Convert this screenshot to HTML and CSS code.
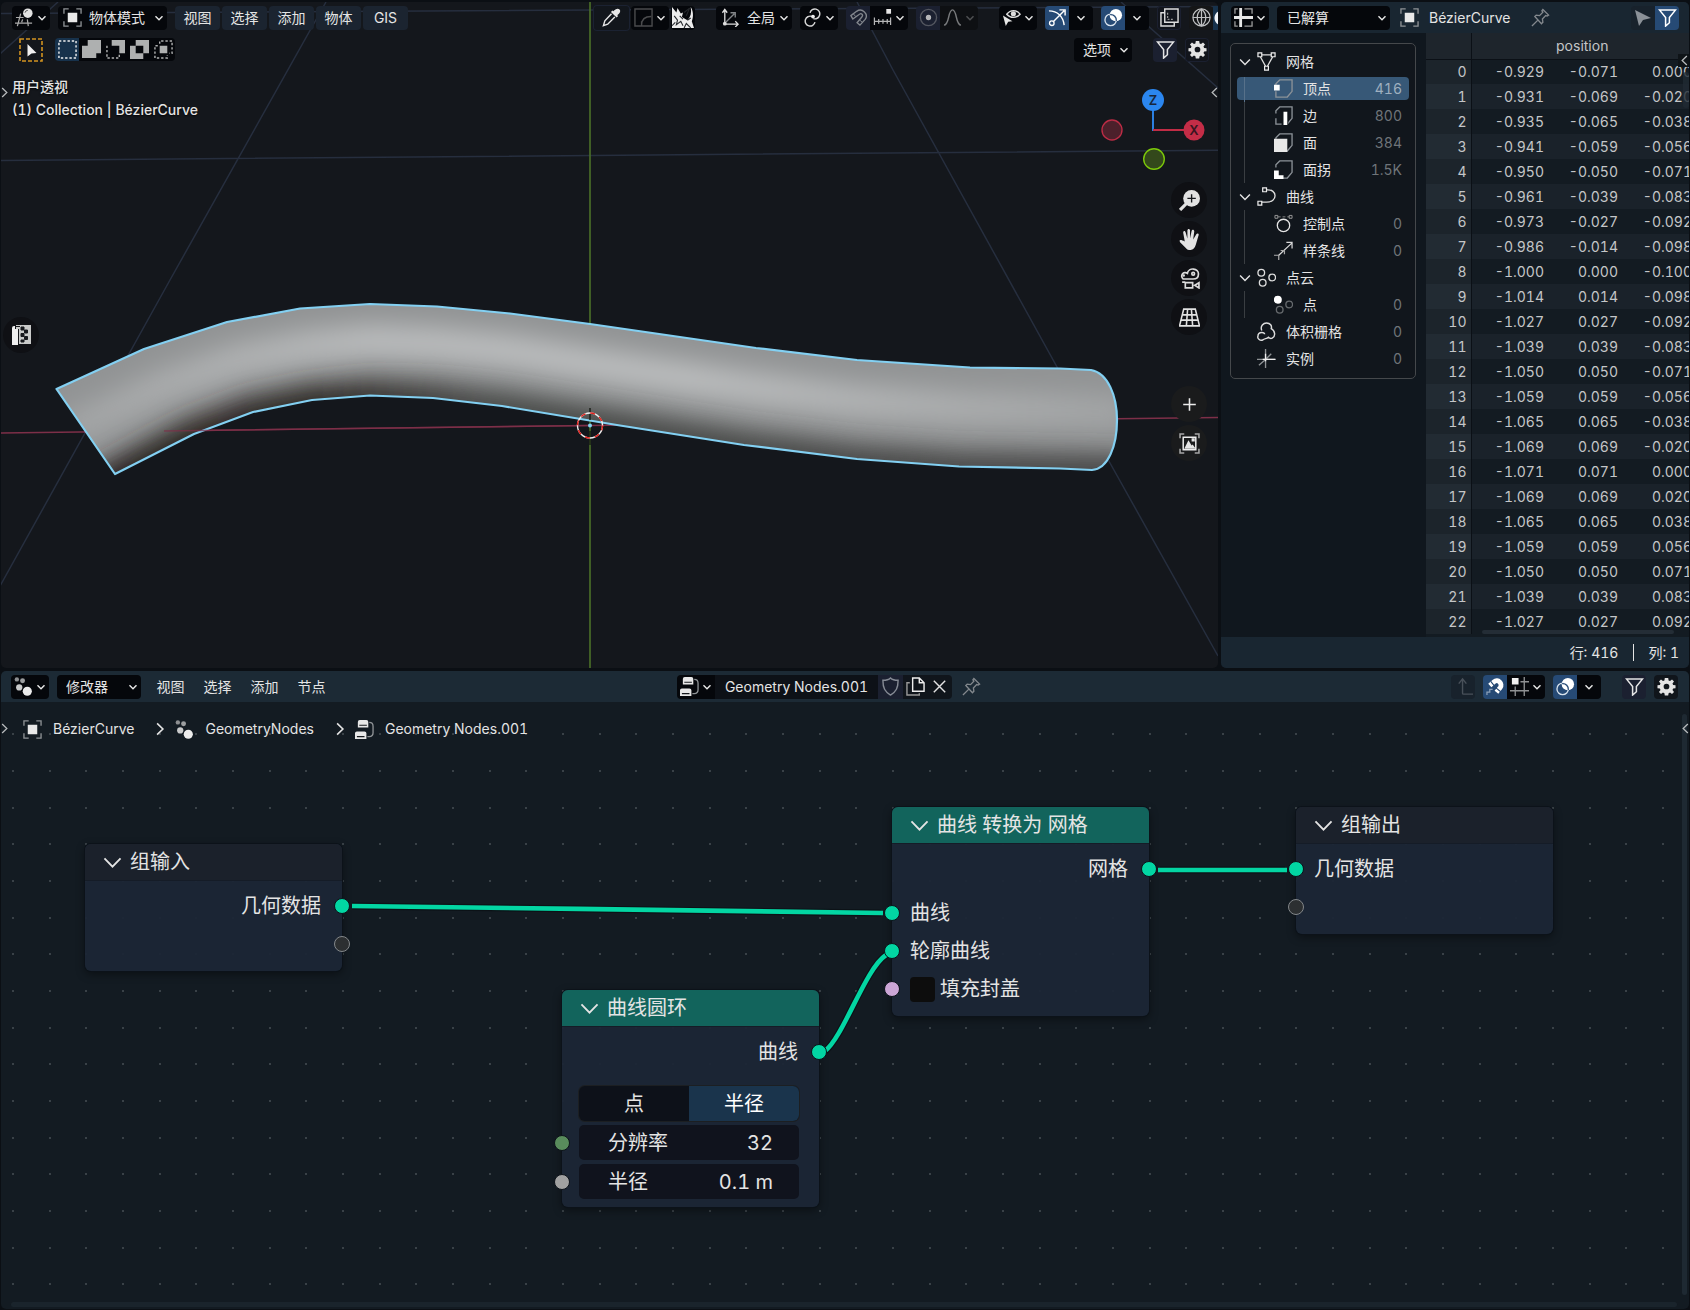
FILE: index.html
```html
<!DOCTYPE html>
<html lang="zh-CN">
<head>
<meta charset="utf-8">
<title>Geometry Nodes.001</title>
<link rel="stylesheet" href="styles.css">
</head>
<body>
<svg class="defs" aria-hidden="true">
  <symbol id="chev" viewBox="0 0 10 10"><path d="M1.500 3.200 5 6.800 8.500 3.200" fill="none" stroke="currentColor"/></symbol>
  <symbol id="obj" viewBox="0 0 20 20"><path d="M5 5h10v10H5z" fill="#e8e8e8"/><path d="M1 6V1h5M14 1h5v5M19 14v5h-5M6 19H1v-5" fill="none" stroke="#8f9396" stroke-width="1.400"/></symbol>
  <symbol id="view3d" viewBox="0 0 20 20"><path d="M1 10h8M0 16h18M6 6 2.500 19M13 12l1 7M8 12l-1 3" stroke="#aaa" stroke-width="1.300" fill="none"/><circle cx="13.500" cy="5.500" r="5" fill="#e2e2e2"/><path d="M10.500 5a3 3 0 0 1 3-2.500" stroke="#555" fill="none"/></symbol>
  <symbol id="cursor" viewBox="0 0 12 12"><path d="M0 0 12 6 6 7.500 3 12z" fill="currentColor"/></symbol>
  <symbol id="dropper" viewBox="0 0 20 20"><path d="M12 3.500c2-3 5-3.500 6.500-2s.5 4-2.500 6l1 1-1.600 1.600-6-6L11 2.500z" fill="#e6e6e6"/><path d="M10 6 3 13.500 1.500 18.500 6 17l7.500-7.500" fill="none" stroke="#e6e6e6" stroke-width="1.500"/></symbol>
  <symbol id="falloff" viewBox="0 0 20 20"><path d="M1 1h18v18H1zM8 18c0-6 3-9 10-9M8 14v5" fill="none" stroke="#4a4b4d" stroke-width="1.500"/></symbol>
  <symbol id="beast" viewBox="0 0 20 20"><path d="M0 0 4 5 5 1l3 5 2-1-1 4 5 3C17 9 18 5 17 0c2 3 3 8 1 13l2 6H0z" fill="#ececec"/><path d="m2 8 3 4-1 4 4-3 2 4M7 8l3 3M11 5l5-4-3 7M0 17l3-3M11 19l2-4 4 4M14 12l3-2" stroke="#24272b" fill="none" stroke-width="1"/></symbol>
  <symbol id="axes" viewBox="0 0 20 20"><path d="M4 18V2M1.500 5 4 1.500 6.500 5M4 17h14M15 14l3 3-3 3" fill="none" stroke="#ddd" stroke-width="1.400"/><path d="m5 15 9-9M10 5h5v5" fill="none" stroke="#84878a" stroke-width="1.400"/><circle cx="4" cy="16.500" r="2" fill="#ddd"/></symbol>
  <symbol id="pivot" viewBox="0 0 20 20"><path d="M10 8.500a5.200 5.200 0 1 0-1 7M10 11.500a5.200 5.200 0 1 0 1-7" fill="none" stroke="#d6d6d6" stroke-width="1.500" transform="rotate(-38 10 10)"/><circle cx="10.500" cy="9" r="2" fill="#eee"/></symbol>
  <symbol id="magnet" viewBox="0 0 20 20"><path d="m2 8 6-4.500c6-4 13 3 9 8.500L11.500 18 8.500 15.500l5-6C15.500 7 13 5 11 6.500L4 11.500z" fill="none" stroke="#82868d" stroke-width="1.400"/><path d="m4.500 6 2.500 3M14 15l-3-2.500" stroke="#82868d" fill="none"/></symbol>
  <symbol id="ruler" viewBox="0 0 20 20"><path d="M1 14h18M1.500 10v8M6 11.500v5M10.500 11.500v5M15 11.500v5M18.500 10v8" fill="none" stroke="#b5b6b7" stroke-width="1.300"/><path d="M14 1h5v5h-5z" fill="#e6e6e6"/></symbol>
  <symbol id="prop" viewBox="0 0 20 20"><circle cx="10" cy="10" r="8.500" fill="none" stroke="#53565f" stroke-width="1.400"/><circle cx="10" cy="10" r="2.800" fill="#b4b5b8"/></symbol>
  <symbol id="bell" viewBox="0 0 20 20"><path d="M1 18C7 18 5 2 10 2s3 16 9 16" fill="none" stroke="#77797b" stroke-width="1.500"/></symbol>
  <symbol id="eye" viewBox="0 0 20 20"><path d="M5 6.500C9 1.500 15 1.500 19 6.500c-4 4.500-10 4.500-14 0z" fill="none" stroke="#ddd" stroke-width="1.500"/><circle cx="12" cy="6" r="2.700" fill="#ddd"/><path d="m1 8 10 6-4.500.5L4 19z" fill="#e6e6e6"/></symbol>
  <symbol id="gizmo" viewBox="0 0 20 20"><path d="M1 3c9 0 15 6 16 15M5 15 17 3M12 2h6v6" fill="none" stroke="#fff" stroke-width="1.500"/><circle cx="4" cy="16" r="2.400" fill="#264a75" stroke="#fff" stroke-width="1.400"/></symbol>
  <symbol id="overlay" viewBox="0 0 20 20"><circle cx="12.500" cy="7.500" r="6.500" fill="#fff"/><circle cx="7" cy="12.500" r="6" fill="none" stroke="#d8e2ec" stroke-width="1.400"/><path d="M6.500 7a6 6 0 0 1 6.500 6.500" fill="none" stroke="#264a75" stroke-width="1.400"/></symbol>
  <symbol id="xray" viewBox="0 0 20 20"><path d="M5 1h14v14H5z" fill="none" stroke="#ddd" stroke-width="1.500"/><path d="M5 5H1v14h14v-4" fill="none" stroke="#ddd" stroke-width="1.500"/><path d="M8 5v7h7" fill="none" stroke="#999" stroke-width="1.300" stroke-dasharray="2 1.500"/></symbol>
  <symbol id="globe" viewBox="0 0 20 20"><g fill="none" stroke="#bfc0c1" stroke-width="1.300"><circle cx="10" cy="10" r="9"/><path d="M10 1v18M1 10h18M10 1c-6 5-6 13 0 18M10 1c6 5 6 13 0 18"/></g></symbol>
  <symbol id="funnel" viewBox="0 0 20 20"><path d="M1.500 2h17L12 10v5.500L8 19v-9z" fill="none" stroke="currentColor" stroke-width="1.600"/></symbol>
  <symbol id="gear" viewBox="0 0 20 20"><path d="M8.200 1h3.600l.4 2.600 1.500.6L15.800 2.600l2.100 2.100-1.600 2.200.7 1.500 2.500.3v3.100l-2.500.4-.7 1.500 1.600 2.200-2.100 2-2.100-1.500-1.500.6-.4 2.500H8.200l-.4-2.500-1.500-.6-2.100 1.500-2.100-2 1.600-2.200-.7-1.500L.5 11.800V8.700L3 8.400l.7-1.500-1.600-2.200 2.100-2.100 2.100 1.600 1.500-.6zM10 7a3 3 0 1 0 0 6 3 3 0 0 0 0-6z" fill="#e4e4e4" fill-rule="evenodd"/></symbol>
  <symbol id="pin" viewBox="0 0 20 20"><path d="m12.500 1.500 6 6-1.500 1-1.500-.5-3.500 3.500.5 3.500-1.500 1.500L4 9l1.500-1.500 3.500.5L12.500 4.500 11.500 3zM7.500 12.500 1 19" fill="none" stroke="#83888d" stroke-width="1.400"/></symbol>
  <symbol id="sheet" viewBox="0 0 20 20"><path d="M0 8.500h20v3H0zM5.500 0h3v20h-3z" fill="#e6e6e6"/><path d="M1 6V1h3M11 1h8v5M19 14v5h-8M1 14v5h3" fill="none" stroke="#999" stroke-width="1.400"/></symbol>
  <symbol id="mesh" viewBox="0 0 20 20"><path d="M5 3h10M3.500 5 9 15M16.500 5 11 15" fill="none" stroke="#ddd" stroke-width="1.400"/><path d="M1 1h4v4H1zM15 1h4v4h-4zM8 15h4v4H8z" fill="#14181d" stroke="#eee" stroke-width="1.300"/></symbol>
  <symbol id="cube" viewBox="0 0 20 20"><path d="M2 8V5l4-4h13v12l-5 6H2v-6" fill="none" stroke="#8c9298" stroke-width="1.400"/></symbol>
  <symbol id="vert" viewBox="0 0 20 20"><use href="#cube"/><path d="M0 6h6v6H0z" fill="#fff"/></symbol>
  <symbol id="edge" viewBox="0 0 20 20"><use href="#cube"/><path d="M8 5h7v15H8z" fill="#11161b"/><path d="M10 6h4v14h-4z" fill="#fff"/></symbol>
  <symbol id="face" viewBox="0 0 20 20"><use href="#cube"/><path d="M0 6h14v14H0z" fill="#e8e8e8"/></symbol>
  <symbol id="corner" viewBox="0 0 20 20"><use href="#cube"/><path d="M0 11h5v5h5v4H0z" fill="#fff"/></symbol>
  <symbol id="curve" viewBox="0 0 20 20"><path d="M10 3c12-1 12 13 0 13H5" fill="none" stroke="#ddd" stroke-width="1.400"/><path d="M6 1h4v4H6zM1 15h4v4H1z" fill="#14181d" stroke="#eee" stroke-width="1.300"/></symbol>
  <symbol id="cpoint" viewBox="0 0 20 20"><circle cx="10" cy="12" r="6.500" fill="none" stroke="#e4e4e4" stroke-width="1.400"/><path d="M4 3h12" stroke="#888" stroke-dasharray="3 2"/><path d="M1 1.500h3v3H1zM16 1.500h3v3h-3z" fill="none" stroke="#999"/></symbol>
  <symbol id="spline" viewBox="0 0 20 20"><path d="m5 15 14-13M13 1.500h6V8" fill="none" stroke="#d9d9d9" stroke-width="1.300"/><path d="M0 15h5v5M7 10h4v4" fill="none" stroke="#a9a9a9" stroke-width="1.300"/></symbol>
  <symbol id="cloud" viewBox="0 0 20 20"><g fill="none" stroke="#ddd" stroke-width="1.400"><circle cx="4.500" cy="5" r="3.500"/><circle cx="16" cy="10" r="3.500"/><circle cx="6" cy="15.500" r="3.500"/></g></symbol>
  <symbol id="point" viewBox="0 0 20 20"><circle cx="4" cy="5" r="4.200" fill="#fff"/><g fill="none" stroke="#666a6d" stroke-width="1.400"><circle cx="16" cy="10" r="3.500"/><circle cx="6" cy="15.500" r="3.500"/></g></symbol>
  <symbol id="volume" viewBox="0 0 20 20"><path d="M5 9C3 4 7 1 10 1c4 0 6 3 5 6 4 2 5 8 1 10-2 1-3 0-4-1-2 2-4 1-6 3-3 1-6-2-5-4 0-2 1-4 4-4 2 0 3 1 3 2" fill="none" stroke="#ddd" stroke-width="1.500"/></symbol>
  <symbol id="inst" viewBox="0 0 20 20"><path d="M9 0v20M0 11h20M9 11 2 17M9 11l6-6" stroke="#8e9295" stroke-width="1.400" fill="none"/><path d="M9 5v8M6 11h13" stroke="#eee" stroke-width="1.400"/></symbol>
  <symbol id="gnmod" viewBox="0 0 20 20"><circle cx="3" cy="2.500" r="2.300" fill="#8d8f91"/><circle cx="9" cy="4" r="2.600" fill="#9c9ea0"/><circle cx="5.500" cy="11" r="3.300" fill="#c9cacb"/><circle cx="14" cy="15" r="4.800" fill="#ececec"/></symbol>
  <symbol id="tree" viewBox="0 0 20 20"><path d="M5 0h7q2 0 2 2v6H3V2q0-2 2-2zM2 12h8q2 0 2 2v6H0v-6q0-2 2-2z" fill="#e8e8e8"/><path d="M4.500 5.500h8M2 17.500h8" stroke="#16191d" stroke-width="1.200"/><path d="M15 2.500q4 0 4 4v7q0 4-4 4h-2" fill="none" stroke="#8f9396" stroke-width="1.400"/></symbol>
  <symbol id="shield" viewBox="0 0 20 20"><path d="M10 1c2 2 5 2.500 8 2.500 0 8-2 12-8 15.500C4 15.500 2 11.500 2 3.500 5 3.500 8 3 10 1z" fill="none" stroke="#858a94" stroke-width="1.500"/></symbol>
  <symbol id="copy" viewBox="0 0 20 20"><path d="M7 1h7l5 5v9H7zM14 1v5h5" fill="none" stroke="#eee" stroke-width="1.500"/><path d="M4 6H1v13h13v-2" fill="none" stroke="#999" stroke-width="1.500"/></symbol>
  <symbol id="cross" viewBox="0 0 20 20"><path d="m4 4 12 12M16 4 4 16" stroke="#e2e2e2" stroke-width="1.500"/></symbol>
  <symbol id="up" viewBox="0 0 20 20"><path d="M5 7l4-5 4 5M9 2v15q0 1 1 1h10" fill="none" stroke="#485059" stroke-width="1.500"/></symbol>
  <symbol id="magneton" viewBox="0 0 20 20"><path d="m4 9 4.500-4c4-3.500 9.500 2 6.500 6L11 16" fill="none" stroke="#fff" stroke-width="5"/><path d="m5 4.500 4 5M15.500 15.500l-5-4" stroke="#264a75" stroke-width="1.200"/><path d="M1 19v-3h3v-3h3" fill="none" stroke="#8ca0b8" stroke-width="1.300"/></symbol>
  <symbol id="gridsnap" viewBox="0 0 20 20"><path d="M0 14.500h20M11 5h9M5.500 10v10M15 0v20" stroke="#8f9193" stroke-width="1.400"/><path d="M2 1h7v7H2z" fill="#f0f0f0"/></symbol>
</svg>

<div class="screen">
  <section class="area viewport" aria-label="3D">
    <svg class="scene" viewBox="1 2 1217 666" preserveAspectRatio="xMidYMid slice" aria-hidden="true">
      <defs>
        <path id="pipe" d="M56.500 389 144 349 227 322 300 308.500 370 304 437 306.500 510 313.500 590 324 756 348 857 360 970 367.500 1060 368.500 1091 370C1108 373 1117 396 1117 420 1117 446 1108 469 1092 470L1060 468.500 959 466.500 857 459 744 445 620 425.500 502 406 433 398 370 395.500 312 400 253 412 194 434 115 474z"/>
        <clipPath id="pipeclip"><use href="#pipe"/></clipPath>
        <filter id="soft" x="-10%" y="-60%" width="120%" height="220%"><feGaussianBlur stdDeviation="11"/></filter>
        <filter id="softer" x="-10%" y="-60%" width="120%" height="220%"><feGaussianBlur stdDeviation="13"/></filter>
        <linearGradient id="glow" gradientUnits="userSpaceOnUse" x1="56" y1="0" x2="1117" y2="0"><stop offset="0" stop-color="#a2a4a5"/><stop offset=".3" stop-color="#bcbebf"/><stop offset=".6" stop-color="#bdbfc0"/><stop offset="1" stop-color="#a3a5a6"/></linearGradient>
        <linearGradient id="under" gradientUnits="userSpaceOnUse" x1="56" y1="0" x2="1117" y2="0"><stop offset="0" stop-color="#2c2623"/><stop offset=".25" stop-color="#332f2c"/><stop offset=".4" stop-color="#4c4d4c"/><stop offset="1" stop-color="#4c4c4b"/></linearGradient>
      </defs>
      <g stroke="#262e3e" stroke-width="1.500" fill="none">
        <path d="M0 13.500 1218 6.500M0 160.500 1218 150.300M326 2 170 280 0 586M58 2 0 54M857 2 893 70 1110 463 1218 656M1121 2 1218 88"/>
      </g>
      <path d="M0 433 590 425.500 1218 417.500" stroke="#7d2f48" stroke-width="1.500" fill="none"/>
      <path d="M590 0V668" stroke="#4b7129" stroke-width="1.600"/>
      <g clip-path="url(#pipeclip)">
        <use href="#pipe" fill="#919394"/>
        <path d="M60 430 81 425 165 385 238 360 305 347 370 341 435 344 507 351 590 364 751 388 857 401 965 408 1130 412" fill="none" stroke="url(#glow)" stroke-width="32" filter="url(#softer)"/>
        <path d="M100 492 194 442 253 420 312 408 370 403 433 406 502 414 620 433 744 453 857 467 959 474 1130 477" fill="none" stroke="url(#under)" stroke-width="46" filter="url(#soft)"/>
      </g>
      <use href="#pipe" fill="none" stroke="#83d0f2" stroke-width="2.200" stroke-linejoin="round"/>
      <path d="M164 431 590 425.500" stroke="#7d2f48" stroke-width="1.500" opacity=".7"/>
      <path d="M590 408v12M590 431v14" stroke="#171c15" stroke-width="1.400"/>
      <circle cx="590" cy="425.500" r="12.500" fill="none" stroke="#eee" stroke-width="1.400"/>
      <circle cx="590" cy="425.500" r="12.500" fill="none" stroke="#e2201c" stroke-width="1.400" stroke-dasharray="4.900 4.900"/>
      <circle cx="590" cy="425.500" r="2" fill="#83d0f2"/>
    </svg>

    <div class="vhead">
      <div class="bar">
        <button class="ctl duo" aria-label="编辑器类型"><svg class="ic"><use href="#view3d"/></svg><svg class="ch"><use href="#chev"/></svg></button>
        <label class="ctl pick mode"><svg class="ic"><use href="#obj"/></svg><select aria-label="模式"><option>物体模式</option></select><svg class="ch"><use href="#chev"/></svg></label>
        <nav class="menus"><button>视图</button><button>选择</button><button>添加</button><button>物体</button><button>GIS</button></nav>
        <div class="tools">
          <button class="ctl dropper" aria-label="吸管"><svg class="ic"><use href="#dropper"/></svg></button>
          <button class="ctl duo" aria-label="衰减"><svg class="ic"><use href="#falloff"/></svg><svg class="ch"><use href="#chev"/></svg></button>
          <button class="ctl one photo" aria-label="预览"><svg class="ic"><use href="#beast"/></svg></button>
          <label class="ctl pick orient"><svg class="ic"><use href="#axes"/></svg><select aria-label="坐标系"><option>全局</option></select><svg class="ch"><use href="#chev"/></svg></label>
          <button class="ctl duo gap8" aria-label="轴心"><svg class="ic"><use href="#pivot"/></svg><svg class="ch"><use href="#chev"/></svg></button>
          <div class="pair gap8"><button class="ctl one navy" aria-label="吸附"><svg class="ic"><use href="#magnet"/></svg></button><button class="ctl duo" aria-label="吸附选项"><svg class="ic"><use href="#ruler"/></svg><svg class="ch"><use href="#chev"/></svg></button></div>
          <div class="pair gap8"><button class="ctl one navy" aria-label="衰减编辑"><svg class="ic"><use href="#prop"/></svg></button><button class="ctl duo dim" aria-label="衰减类型"><svg class="ic"><use href="#bell"/></svg><svg class="ch"><use href="#chev"/></svg></button></div>
          <button class="ctl duo gap20" aria-label="可见性"><svg class="ic"><use href="#eye"/></svg><svg class="ch"><use href="#chev"/></svg></button>
          <div class="pair gap8"><button class="ctl one on" aria-label="Gizmo"><svg class="ic"><use href="#gizmo"/></svg></button><button class="ctl one" aria-label="Gizmo 选项"><svg class="ch"><use href="#chev"/></svg></button></div>
          <div class="pair gap8"><button class="ctl one on" aria-label="叠加层"><svg class="ic"><use href="#overlay"/></svg></button><button class="ctl one" aria-label="叠加层选项"><svg class="ch"><use href="#chev"/></svg></button></div>
          <button class="ctl one ghost gap8" aria-label="透视模式"><svg class="ic"><use href="#xray"/></svg></button>
          <button class="ctl one grey gap8" aria-label="线框"><svg class="ic"><use href="#globe"/></svg></button>
          <span class="cut"></span>
        </div>
      </div>
      <div class="bar second">
        <button class="seltool" aria-label="框选"><svg viewBox="0 0 24 24"><path d="M1 1h22v22H1z" fill="none" stroke="#d29420" stroke-width="1.600" stroke-dasharray="4 2"/><path d="m8.500 6 9 9-5 .5-4 3z" fill="#f0f0f0"/></svg></button>
        <div class="pair selmodes">
          <button class="ctl one blue" aria-label="设置"><svg viewBox="0 0 20 20"><path d="M1 1h18v18H1z" fill="none" stroke="#f0f0f0" stroke-width="1.500" stroke-dasharray="2.500 2"/></svg></button>
          <button class="ctl one" aria-label="扩展"><svg viewBox="0 0 20 20"><path d="M6 0h14v14h-5v5H0V6h6z" fill="#aeb0b0"/></svg></button>
          <button class="ctl one" aria-label="减去"><svg viewBox="0 0 20 20"><path d="M6 0h14v14h-6V6H6z" fill="#aeb0b0"/><path d="M1 6v13h13v-5" fill="none" stroke="#aeb0b0" stroke-width="1.500" stroke-dasharray="2.500 2"/></svg></button>
          <button class="ctl one" aria-label="反转"><svg viewBox="0 0 20 20"><path d="M6 0h14v14h-6v6H0V6h6zM6 6v8h8V6z" fill="#aeb0b0" fill-rule="evenodd"/></svg></button>
          <button class="ctl one" aria-label="相交"><svg viewBox="0 0 20 20"><path d="M6 6h8v8H6z" fill="#aeb0b0"/><path d="M6 4V1h13v13h-3M4 6H1v13h13v-3" fill="none" stroke="#aeb0b0" stroke-width="1.500" stroke-dasharray="2.500 2"/></svg></button>
        </div>
        <label class="ctl pick opts"><select aria-label="选项"><option>选项</option></select><svg class="ch"><use href="#chev"/></svg></label>
        <button class="ctl one navy funnelbtn" aria-label="过滤"><svg class="ic"><use href="#funnel"/></svg></button>
        <button class="ctl one ghost gap8" aria-label="设置"><svg class="ic"><use href="#gear"/></svg></button>
      </div>
      <p class="info">用户透视<br>(1) Collection | BézierCurve</p>
    </div>

    <svg class="axis" viewBox="0 0 110 90" aria-hidden="true">
      <path d="M53 20v31" stroke="#2c7fe0" stroke-width="2"/><path d="M53 50h35" stroke="#c12c45" stroke-width="2"/>
      <circle cx="53" cy="20" r="11" fill="#2b86ef"/><circle cx="94" cy="50" r="10.500" fill="#c42d47"/>
      <circle cx="12" cy="50" r="10" fill="#4c202b" stroke="#bb2c45" stroke-width="1.400"/><circle cx="54" cy="79" r="10.300" fill="#33481b" stroke="#7cc80a" stroke-width="1.400"/>
      <text x="53" y="25">Z</text><text class="red" x="94" y="55">X</text>
    </svg>
    <div class="nav">
      <button aria-label="缩放"><svg viewBox="0 0 20 20"><path d="m1 19 6-6" stroke="#e2e2e2" stroke-width="3"/><circle cx="12" cy="8" r="8" fill="#e2e2e2"/><path d="M12 4v8M8 8h8" stroke="#15171b" stroke-width="1.300"/></svg></button>
      <button aria-label="平移"><svg viewBox="0 0 20 20"><path d="M6.500 18 1 12.500C-.5 10 2 10 5.500 12L4 3.500c0-2 2-2 2.400 0L8 9V1.500c0-2 2.500-2 2.500 0V9l1.500-7c.5-2 2.700-1.500 2.500.5L13.500 10l3-5c1-1.500 3-.5 2 1.500L16 15c-1 3-2.500 5-5 5-2 0-3.500-.500-4.500-2z" fill="#e2e2e2"/></svg></button>
      <button aria-label="相机"><svg viewBox="0 0 20 20"><g fill="none" stroke="#dcdcdc" stroke-width="1.600"><path d="M4 10.500a3.300 3.300 0 1 1 4-5.500c1-6 11-5 10.500 1 0 3-2 4.500-5 4.500z"/><circle cx="13.500" cy="5.500" r="1.300"/><path d="M6 14h7v5H6zM3 13.500h3M19 14v5l-4-2.500z"/></g><circle cx="4.500" cy="7.200" r="1.200" fill="#ddd"/></svg></button>
      <button aria-label="透视"><svg viewBox="0 0 20 20"><path d="M4.500 2h11l4 16H.5zM3 7.500h14M2 12.500h16M8.200 2 7 18M11.800 2 13 18" fill="none" stroke="#e2e2e2" stroke-width="1.500"/></svg></button>
      <button class="later" aria-label="添加"><svg viewBox="0 0 20 20"><path d="M10 4v12M4 10h12" stroke="#ececec" stroke-width="1.500"/></svg></button>
      <button class="faint" aria-label="图像"><svg viewBox="0 0 20 20"><path d="M1 5V1h4M15 1h4v4M19 15v4h-4M5 19H1v-4" fill="none" stroke="#a5a5a5" stroke-width="1.500"/><path d="M4 4h12v12H4z" fill="none" stroke="#eee" stroke-width="1.400"/><path d="m5 15 4-8 3 5 1-1 3 4zM12 5h3v3h-3z" fill="#e6e6e6"/></svg></button>
    </div>
    <button class="leftbtn" aria-label="抠像"><svg viewBox="0 0 20 20"><path d="M5 0h15v19H5z" fill="#c9cac9"/><path d="M1 3q0-2 2-2h1v3h3v16H1z" fill="#efefef"/><path d="M4.500 1.500H9M7.500 4v15M10 2h3v3h-3zM13.500 5h3v3h-3zM10 8.500h3v3h-3zM13.500 11.500h3v3h-3zM10 15h3v2h-3z" fill="#17191d" stroke="#17191d" stroke-width="1"/></svg></button>
    <svg class="edge ltab"><use href="#chev"/></svg><svg class="edge rtab"><use href="#chev"/></svg>
  </section>

  <section class="area sheet" aria-label="电子表格">
    <header class="head sheethead">
      <button class="ctl duo" aria-label="编辑器类型"><svg class="ic"><use href="#sheet"/></svg><svg class="ch"><use href="#chev"/></svg></button>
      <label class="ctl pick solved"><select aria-label="求解状态"><option>已解算</option></select><svg class="ch"><use href="#chev"/></svg></label>
      <svg class="ic objic"><use href="#obj"/></svg><span class="objname">BézierCurve</span>
      <svg class="ic"><use href="#pin"/></svg>
      <div class="pair push"><button class="ctl one clear" aria-label="仅选中"><svg class="ptr"><use href="#cursor"/></svg></button><button class="ctl one on" aria-label="过滤"><svg class="ic"><use href="#funnel"/></svg></button></div>
    </header>
    <div class="sheetbody">
      <aside class="side">
        <ul class="domains">
          <li><svg class="ch"><use href="#chev"/></svg><svg class="ic"><use href="#mesh"/></svg><span>网格</span></li>
          <li class="sub sel"><svg class="ic"><use href="#vert"/></svg><span>顶点</span><b>416</b></li>
          <li class="sub"><svg class="ic"><use href="#edge"/></svg><span>边</span><b>800</b></li>
          <li class="sub"><svg class="ic"><use href="#face"/></svg><span>面</span><b>384</b></li>
          <li class="sub"><svg class="ic"><use href="#corner"/></svg><span>面拐</span><b>1.5K</b></li>
          <li><svg class="ch"><use href="#chev"/></svg><svg class="ic"><use href="#curve"/></svg><span>曲线</span></li>
          <li class="sub"><svg class="ic"><use href="#cpoint"/></svg><span>控制点</span><b>0</b></li>
          <li class="sub"><svg class="ic"><use href="#spline"/></svg><span>样条线</span><b>0</b></li>
          <li><svg class="ch"><use href="#chev"/></svg><svg class="ic"><use href="#cloud"/></svg><span>点云</span></li>
          <li class="sub"><svg class="ic"><use href="#point"/></svg><span>点</span><b>0</b></li>
          <li class="leaf"><svg class="ic"><use href="#volume"/></svg><span>体积栅格</span><b>0</b></li>
          <li class="leaf"><svg class="ic"><use href="#inst"/></svg><span>实例</span><b>0</b></li>
        </ul>
      </aside>
      <div class="grid">
        <table>
          <thead><tr><th class="idx"></th><th colspan="3">position</th></tr></thead>
          <tbody>
            <tr><th>0</th><td>-0.929</td><td>-0.071</td><td>0.000</td></tr>
            <tr><th>1</th><td>-0.931</td><td>-0.069</td><td>-0.020</td></tr>
            <tr><th>2</th><td>-0.935</td><td>-0.065</td><td>-0.038</td></tr>
            <tr><th>3</th><td>-0.941</td><td>-0.059</td><td>-0.056</td></tr>
            <tr><th>4</th><td>-0.950</td><td>-0.050</td><td>-0.071</td></tr>
            <tr><th>5</th><td>-0.961</td><td>-0.039</td><td>-0.083</td></tr>
            <tr><th>6</th><td>-0.973</td><td>-0.027</td><td>-0.092</td></tr>
            <tr><th>7</th><td>-0.986</td><td>-0.014</td><td>-0.098</td></tr>
            <tr><th>8</th><td>-1.000</td><td>0.000</td><td>-0.100</td></tr>
            <tr><th>9</th><td>-1.014</td><td>0.014</td><td>-0.098</td></tr>
            <tr><th>10</th><td>-1.027</td><td>0.027</td><td>-0.092</td></tr>
            <tr><th>11</th><td>-1.039</td><td>0.039</td><td>-0.083</td></tr>
            <tr><th>12</th><td>-1.050</td><td>0.050</td><td>-0.071</td></tr>
            <tr><th>13</th><td>-1.059</td><td>0.059</td><td>-0.056</td></tr>
            <tr><th>14</th><td>-1.065</td><td>0.065</td><td>-0.038</td></tr>
            <tr><th>15</th><td>-1.069</td><td>0.069</td><td>-0.020</td></tr>
            <tr><th>16</th><td>-1.071</td><td>0.071</td><td>0.000</td></tr>
            <tr><th>17</th><td>-1.069</td><td>0.069</td><td>0.020</td></tr>
            <tr><th>18</th><td>-1.065</td><td>0.065</td><td>0.038</td></tr>
            <tr><th>19</th><td>-1.059</td><td>0.059</td><td>0.056</td></tr>
            <tr><th>20</th><td>-1.050</td><td>0.050</td><td>0.071</td></tr>
            <tr><th>21</th><td>-1.039</td><td>0.039</td><td>0.083</td></tr>
            <tr><th>22</th><td>-1.027</td><td>0.027</td><td>0.092</td></tr>
          </tbody>
        </table>
        <span class="hscroll"></span><span class="vscroll"></span>
        <svg class="edge stab"><use href="#chev"/></svg>
      </div>
    </div>
    <footer class="status"><span>行: 416</span><i></i><span>列: 1</span></footer>
  </section>

  <section class="area nodes" aria-label="几何节点编辑器">
    <header class="head nodehead">
      <button class="ctl duo" aria-label="编辑器类型"><svg class="ic"><use href="#gnmod"/></svg><svg class="ch"><use href="#chev"/></svg></button>
      <label class="ctl pick modif"><select aria-label="节点树类型"><option>修改器</option></select><svg class="ch"><use href="#chev"/></svg></label>
      <nav class="plain"><button>视图</button><button>选择</button><button>添加</button><button>节点</button></nav>
      <span class="lead"></span>
      <div class="pair">
        <button class="ctl duo" aria-label="浏览节点树"><svg class="ic"><use href="#tree"/></svg><svg class="ch"><use href="#chev"/></svg></button>
        <input class="treename" aria-label="节点树名称" value="Geometry Nodes.001">
        <button class="ctl one wide navy" aria-label="伪用户"><svg class="ic"><use href="#shield"/></svg></button>
        <button class="ctl one wide ink" aria-label="复制"><svg class="ic"><use href="#copy"/></svg></button>
        <button class="ctl one ink" aria-label="断开"><svg class="ic"><use href="#cross"/></svg></button>
      </div>
      <svg class="ic pinic"><use href="#pin"/></svg>
      <span class="trail"></span>
      <button class="ctl one upbtn" aria-label="上级"><svg class="ic"><use href="#up"/></svg></button>
      <div class="pair gap8"><button class="ctl one on" aria-label="吸附"><svg class="ic"><use href="#magneton"/></svg></button><button class="ctl duo" aria-label="吸附选项"><svg class="ic"><use href="#gridsnap"/></svg><svg class="ch"><use href="#chev"/></svg></button></div>
      <div class="pair gap8"><button class="ctl one on" aria-label="叠加层"><svg class="ic"><use href="#overlay"/></svg></button><button class="ctl one" aria-label="叠加层选项"><svg class="ch"><use href="#chev"/></svg></button></div>
      <button class="ctl one navy gap20" aria-label="过滤"><svg class="ic"><use href="#funnel"/></svg></button>
      <button class="ctl one ink gap8" aria-label="设置"><svg class="ic"><use href="#gear"/></svg></button>
    </header>
    <div class="canvas">
      <svg class="dots" aria-hidden="true"><defs><pattern id="dot" width="110" height="110" patternUnits="userSpaceOnUse" x="11" y="31"><path d="M0 0h2v2H0zM37 0h2v2h-2zM73 0h2v2h-2zM0 37h2v2H0zM37 37h2v2h-2zM73 37h2v2h-2zM0 74h2v2H0zM37 74h2v2h-2zM73 74h2v2h-2z" fill="#394147"/></pattern></defs><rect width="100%" height="100%" fill="url(#dot)"/></svg>
      <nav class="crumbs">
        <svg class="ic"><use href="#obj"/></svg><a href="#o">BézierCurve</a><svg class="sep"><use href="#chev"/></svg>
        <svg class="ic"><use href="#gnmod"/></svg><a href="#m">GeometryNodes</a><svg class="sep"><use href="#chev"/></svg>
        <svg class="ic"><use href="#tree"/></svg><a href="#t">Geometry Nodes.001</a>
      </nav>

      <article class="node n-in">
        <h2><svg><use href="#chev"/></svg>组输入</h2>
        <div class="row out">几何数据<i class="sock geo"></i></div>
        <div class="row out"><i class="sock none"></i></div>
      </article>
      <article class="node green n-mesh">
        <h2><svg><use href="#chev"/></svg>曲线 转换为 网格</h2>
        <div class="row out gapped">网格<i class="sock geo"></i></div>
        <div class="row">曲线<i class="sock geo"></i></div>
        <div class="row">轮廓曲线<i class="sock geo"></i></div>
        <div class="row tick"><i class="sock bool"></i><input type="checkbox" id="cap"><label for="cap">填充封盖</label></div>
      </article>
      <article class="node n-out">
        <h2><svg><use href="#chev"/></svg>组输出</h2>
        <div class="row">几何数据<i class="sock geo"></i></div>
        <div class="row"><i class="sock none"></i></div>
      </article>
      <article class="node green n-circle">
        <h2><svg><use href="#chev"/></svg>曲线圆环</h2>
        <div class="row out">曲线<i class="sock geo"></i></div>
        <div class="fields">
          <div class="seg"><button>点</button><button class="act">半径</button></div>
          <div class="field"><i class="sock int"></i><label for="res">分辨率</label><input id="res" value="32"></div>
          <div class="field"><i class="sock flt"></i><label for="rad">半径</label><input id="rad" value="0.1 m"></div>
        </div>
      </article>
      <svg class="links" aria-hidden="true"><g fill="none" stroke="#0c1217" stroke-width="7"><path d="M351 204C530 205 700 210 880 211"/><path d="M824 349C843 334 864 267 885 253"/><path d="M1159 168H1284"/></g><g fill="none" stroke="#03d6a3" stroke-width="4.600"><path d="M351 204C530 205 700 210 882 211"/><path d="M824 349C843 334 864 267 885 253"/><path d="M1157 168H1286"/></g></svg>
      <span class="nscroll"></span><span class="bscroll"></span>
      <svg class="edge cl"><use href="#chev"/></svg><svg class="edge cr"><use href="#chev"/></svg>
    </div>
  </section>
</div>
</body>
</html>
```

FILE: styles.css
```css
* { box-sizing: border-box; }
body {
  margin: 0;
  background: #0b0f14;
  color: #e4e4e4;
  font: 14px/20px Inter, "Noto Sans CJK SC", sans-serif;
  font-variant-numeric: tabular-nums;
  overflow: hidden;
}
button, input, select { font: inherit; font-variant-numeric: inherit; color: inherit; border: 0; margin: 0; padding: 0; background: none; }
select { appearance: none; outline: 0; }
a { color: inherit; text-decoration: none; }
.defs { position: absolute; width: 0; height: 0; }

.screen {
  display: grid;
  grid-template: 666fr 638fr / 1217fr 468fr;
  gap: 3px;
  height: 100vh;
  padding: 2px 1px 1px;
}
.area { position: relative; min-width: 0; min-height: 0; overflow: hidden; border-radius: 5px; }
.nodes { grid-column: 1 / 3; display: flex; flex-direction: column; }

/* shared controls */
.ic { width: 19px; height: 19px; flex: none; display: block; }
.ch { width: 10px; height: 10px; flex: none; display: block; stroke-width: 1.4; }
.ctl {
  display: flex; align-items: center; justify-content: center; flex: none;
  height: 24px; border-radius: 4px; background: #05070b; color: #e4e4e4;
}
.duo { width: 38px; gap: 3px; padding: 0 2px; }
.one { width: 24px; }
.wide { width: 25px; }
.navy { background: #1b2030; }
.on { background: #264a75; color: #fff; }
.blue { background: #17324c; }
.ghost { background: #12151c; box-shadow: inset 0 0 0 1px #1b2030; }
.grey { background: #151617; }
.ink { background: #10151b; }
.clear { background: #18222c; color: #8b9198; }
.dim { background: #0e1013; }
.dim .ch { opacity: .3; }
.gap8 { margin-left: 8px; }
.gap20 { margin-left: 21px; }
.pair { display: flex; flex: none; align-items: center; }
.pair > :not(:last-child) { border-top-right-radius: 0; border-bottom-right-radius: 0; }
.pair > :not(:first-child) { border-top-left-radius: 0; border-bottom-left-radius: 0; }
.pick { padding: 0 6px; }
.pick select { flex: 1; min-width: 0; height: 24px; }

/* viewport */
.viewport { background: #14171c; }
.scene { position: absolute; width: 100%; height: 100%; }
.vhead { position: relative; display: flex; flex-direction: column; }
.bar { display: flex; align-items: center; height: 31px; padding-left: 11px; }
.mode { width: 109px; margin-left: 8px; gap: 7px; padding: 0 3px 0 5px; }
.menus { display: flex; gap: 2px; margin-left: 8px; }
.menus button { width: 45px; height: 24px; border-radius: 4px; background: #1b2430; }
.tools { display: flex; align-items: center; margin-left: auto; }
.dropper { width: 37px; height: 26px; background: #12161c; box-shadow: inset 0 0 0 1px #1b2232; margin-right: 1px; }
.photo { margin: 0 21px 0 2px; }
.photo .ic { width: 22px; height: 22px; }
.orient { width: 76px; padding: 0 3px 0 5px; gap: 7px; }
.orient select { flex: none; width: 28px; }
.orient .ch { margin-left: -3px; }
.cut { width: 5px; height: 24px; background: radial-gradient(circle at 9px 12px, #f0f4f8 7px, #17324c 8px); }
.second { padding: 0 9px 0 18px; margin-top: 1px; }
.seltool, .seltool svg { width: 24px; height: 24px; }
.selmodes { margin-left: 12px; }
.selmodes svg { width: 19px; height: 19px; }
.selmodes .ctl { height: 23px; }
.opts { width: 58px; margin-left: auto; padding: 0 3px 0 9px; }
.funnelbtn { margin-left: 21px; }
.info { margin: 10px 0 0 11px; font-weight: 500; line-height: 23px; text-shadow: 0 1px 2px #000; }
.axis { position: absolute; right: 8px; top: 78px; width: 110px; height: 90px; }
.axis text { font: 600 13px Inter, sans-serif; text-anchor: middle; fill: #17253b; }
.axis .red { fill: #3a1420; }
.nav { position: absolute; right: 11px; top: 180px; display: flex; flex-direction: column; gap: 3px; }
.nav button, .leftbtn { width: 36px; height: 36px; border-radius: 50%; background: #0f1014; display: flex; align-items: center; justify-content: center; }
.nav svg { width: 21px; height: 21px; }
.nav .later { margin-top: 48px; background: #1a1b1c; }
.nav .faint { background: #1a1b1c; }
.leftbtn { position: absolute; left: 2px; top: 315px; }
.leftbtn svg { width: 20px; height: 20px; }
.edge { position: absolute; width: 13px; height: 13px; color: #b5b8ba; stroke-width: 1; }
.ltab { left: -3px; top: 84px; transform: rotate(-90deg); }
.rtab { right: -3px; top: 84px; transform: rotate(90deg); }

/* spreadsheet */
.head { display: flex; align-items: center; flex: none; height: 31px; background: #192631; }
.sheet { display: flex; flex-direction: column; background: #10171e; }
.sheethead { padding: 0 10px; }
.solved { width: 113px; margin-left: 8px; padding: 0 3px 0 10px; }
.objic { margin-left: 10px; }
.objname { margin: 0 21px 0 10px; }
.push { margin-left: auto; }
.ptr { width: 16px; height: 16px; }
.sheetbody { flex: 1; min-height: 0; display: flex; }
.side { width: 205px; flex: none; padding: 10px 10px 0 9px; }
.domains { list-style: none; margin: 0; padding: 4px 6px 6px; border: 1px solid #45484b; border-radius: 5px; background: #11161c; }
.domains li { position: relative; display: flex; align-items: center; height: 27px; padding: 0 7px 0 1px; }
.domains .ch { width: 14px; height: 14px; margin-right: 5px; stroke-width: 1; }
.domains span { margin-left: 10px; }
.domains b { margin-left: auto; font-weight: 400; color: #6f7479; }
.domains .leaf { padding-left: 20px; }
.domains .sub { padding-left: 37px; }
.domains .sub::before { content: ""; position: absolute; left: 7px; top: 0; width: 1px; height: 27px; background: #3a3e42; }
.domains .sel { height: 23px; margin: 2px 0; border-radius: 4px; background: #375877; }
.domains .sel::before { background: #57718a; height: 25px; }
.domains .sel b { color: #9fb0c0; }
.grid { position: relative; flex: 1; min-width: 0; overflow: hidden; background: #131b22; }
table { width: 267px; table-layout: fixed; border-collapse: collapse; color: #c4c6c8; }
thead tr { height: 26px; background: #1e252c; }
thead th { font-weight: 400; border-bottom: 1px solid #0b1016; padding: 0; }
th.idx { width: 45px; border-right: 1px solid #0b1016; }
tbody tr { height: 25px; }
tbody tr:nth-child(even) { background: #1a222a; }
tbody th { font-weight: 400; text-align: right; padding: 0 4px 0 0; background: #1c242b; border-right: 1px solid #0b1016; }
tbody tr:nth-child(even) th { background: #222b33; }
tbody td { text-align: right; padding: 0 1px 0 0; }
.hscroll { position: absolute; left: 56px; right: 15px; bottom: 3px; height: 4px; border-radius: 2px; background: #242d36; }
.vscroll { position: absolute; right: 0; top: 39px; width: 6px; height: 36px; border-radius: 3px; background: #202a33; opacity: .8; }
.stab { right: -2px; top: 21px; background: #0f1418; transform: rotate(90deg); }
.status { flex: none; display: flex; align-items: center; justify-content: flex-end; height: 31px; padding-right: 10px; background: #192631; }
.status i { width: 1px; height: 17px; margin: 0 14px 0 15px; background: #e4e4e4; }

/* node editor */
.nodehead { background: #1c2a35; padding: 0 11px 0 10px; }
.modif { width: 84px; margin-left: 8px; padding: 0 3px 0 9px; }
.plain { display: flex; margin-left: 6px; }
.plain button { width: 47px; height: 24px; }
.lead { flex: 8; }
.trail { flex: 11; }
.treename { width: 163px; height: 24px; padding: 0 0 0 10px; background: #0d1117; outline: 0; }
.pinic { margin-left: 10px; }
.upbtn { background: #18222c; }
.canvas { position: relative; flex: 1; min-height: 0; overflow: hidden; background: #131b22; }
.dots { position: absolute; width: 100%; height: 100%; }
.crumbs { position: relative; display: flex; align-items: center; height: 54px; padding-left: 22px; }
.crumbs a { margin-left: 11px; }
.sep { width: 16px; height: 16px; margin: 0 7px 0 18px; transform: rotate(-90deg); stroke-width: 1; }

.node { position: absolute; width: 257px; padding-bottom: 8px; border-radius: 6px; background: rgba(27, 38, 54, .95); box-shadow: 0 0 0 1px #0c1219, 0 3px 10px rgba(0, 0, 0, .45); font-size: 20px; line-height: 36px; }
.node h2 { display: flex; align-items: center; height: 37px; margin: 0 0 6px; padding-left: 16px; gap: 6px; border-radius: 6px 6px 0 0; background: #1b212b; border-bottom: 1px solid #151c27; font-size: 20px; font-weight: 400; }
.node h2 svg { width: 23px; height: 23px; stroke-width: .8; }
.node.green h2 { background: #12645c; }
.row { position: relative; display: flex; align-items: center; height: 38px; padding: 0 21px 0 18px; }
.out { justify-content: flex-end; }
.gapped { margin-bottom: 6px; }
.sock { position: absolute; left: -8px; top: 50%; width: 16px; height: 16px; margin-top: -8px; border-radius: 50%; border: 1px solid #0c1219; z-index: 2; }
.out .sock { left: auto; right: -8px; }
.geo { background: #02d6a3; }
.none { background: #2c2f31; border-color: #83878a; }
.bool { background: #cca6d6; }
.int { background: #598c5c; }
.flt { background: #a1a1a1; }
.tick { gap: 5px; }
.tick input { appearance: none; width: 25px; height: 25px; border-radius: 4px; background: #0d0d0d; }
.fields { display: flex; flex-direction: column; gap: 4px; padding: 15px 20px 0 17px; }
.seg { display: flex; height: 35px; border-radius: 6px; overflow: hidden; box-shadow: 0 0 0 1px #1c1f22; background: #0d1119; }
.seg button { flex: 1; }
.seg .act { background: #1a344c; color: #fff; }
.field { position: relative; display: flex; align-items: center; height: 35px; padding: 0 26px 0 29px; border-radius: 5px; background: #10131d; }
.field input { flex: 1; min-width: 0; text-align: right; outline: 0; }
.field .sock { left: -25px; }
.n-in { left: 84px; top: 142px; }
.n-mesh { left: 891px; top: 105px; }
.n-out { left: 1295px; top: 105px; }
.n-circle { left: 561px; top: 288px; }
.links { position: absolute; left: 0; top: 0; width: 100%; height: 100%; pointer-events: none; }
.nscroll { position: absolute; right: 2px; top: 12px; bottom: 14px; width: 5px; border-radius: 3px; background: #1e2932; }
.bscroll { position: absolute; left: 10px; right: 12px; bottom: 2px; height: 5px; border-radius: 3px; background: #1a242c; }
.cl { left: -3px; top: 20px; transform: rotate(-90deg); }
.cr { right: -3px; top: 20px; transform: rotate(90deg); }
```
